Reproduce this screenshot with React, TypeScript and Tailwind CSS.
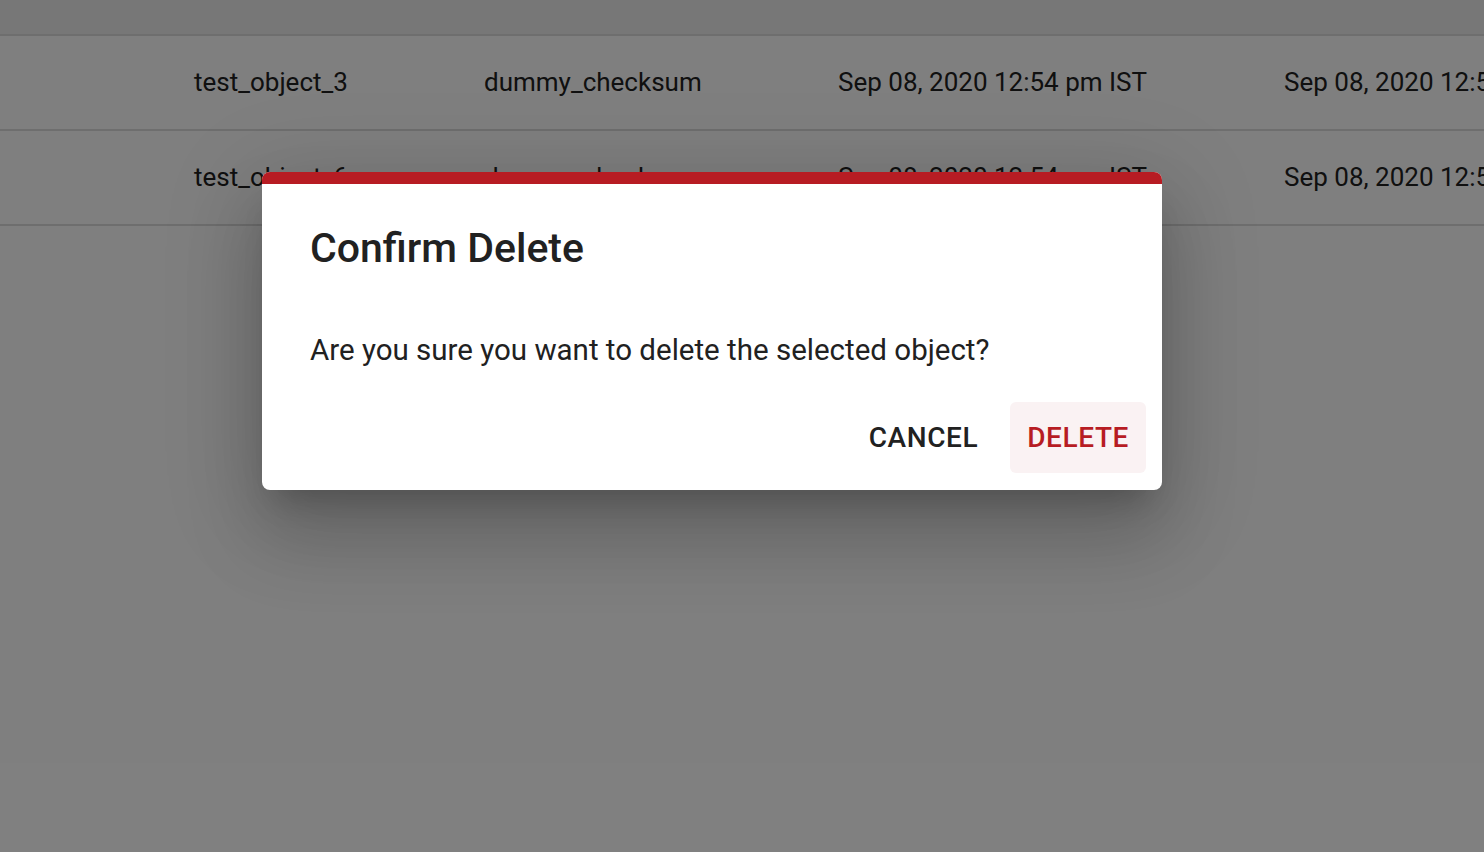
import React from "react";

const rows = [
  { name: "test_object_3", checksum: "dummy_checksum", created: "Sep 08, 2020 12:54 pm IST", updated: "Sep 08, 2020 12:54 pm IST" },
  { name: "test_object_6", checksum: "dummy_checksum", created: "Sep 08, 2020 12:54 pm IST", updated: "Sep 08, 2020 12:54 pm IST" },
];

function ObjectTable() {
  return (
    <div className="w-full">
      {/* header row, cut off at the top */}
      <div className="h-[36px] bg-[#eeeeee] border-b-2 border-[#dddddd]" />
      {rows.map((row) => (
        <div
          key={row.name}
          className="flex items-center h-[95px] border-b-2 border-[#dddddd] pl-[194px] text-[26px] text-[#212121] whitespace-nowrap"
        >
          <div className="w-[290px] shrink-0">{row.name}</div>
          <div className="w-[354px] shrink-0">{row.checksum}</div>
          <div className="w-[446px] shrink-0">{row.created}</div>
          <div className="shrink-0">{row.updated}</div>
        </div>
      ))}
    </div>
  );
}

function ConfirmDialog() {
  return (
    <div className="w-[900px] rounded-[8px] bg-white overflow-hidden shadow-[0_48px_76px_6px_rgba(0,0,0,0.14),0_18px_92px_16px_rgba(0,0,0,0.12),0_22px_30px_-14px_rgba(0,0,0,0.2)]">
      <div className="h-[12px] bg-[#b71c23]" />
      <div className="px-[48px] pt-[38px]">
        <h2 className="text-[41px] font-medium leading-[52px] text-[#212121]">Confirm Delete</h2>
        <p className="mt-[58px] text-[29.5px] leading-[36px] text-[#212121]">
          Are you sure you want to delete the selected object?
        </p>
      </div>
      <div className="flex justify-end items-center gap-[15px] pr-[16px] pt-[34px] pb-[17px]">
        <button className="h-[71px] px-[17px] rounded-[6px] text-[28px] font-medium tracking-[0.6px] text-[#212121]">
          CANCEL
        </button>
        <button className="h-[71px] px-[17px] rounded-[6px] bg-[#faf2f3] text-[28px] font-medium tracking-[0.6px] text-[#b71c23]">
          DELETE
        </button>
      </div>
    </div>
  );
}

export default function App() {
  return (
    <div className="relative w-[1484px] h-[852px] overflow-hidden bg-white font-['Roboto','Liberation_Sans',sans-serif]">
      <ObjectTable />
      {/* backdrop */}
      <div className="absolute inset-0 bg-black/50 pl-[262px] pt-[172px]">
        <ConfirmDialog />
      </div>
    </div>
  );
}
